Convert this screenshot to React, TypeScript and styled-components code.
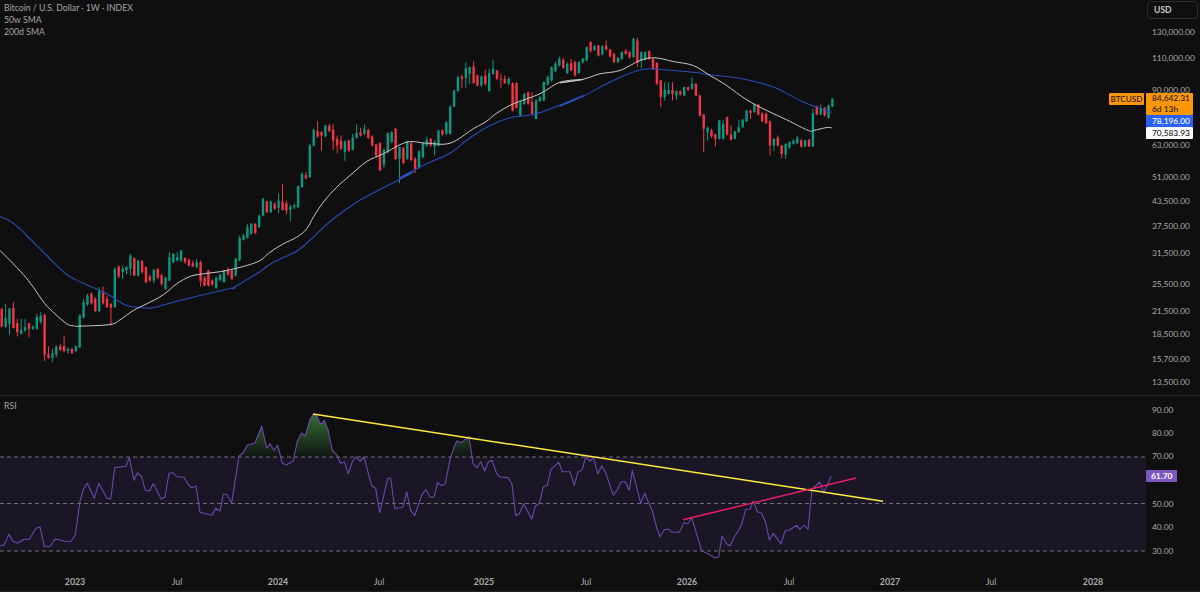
import React from "react";
import styled, { createGlobalStyle } from "styled-components";

type C = [number, number, number, number?, number?];
const S3: C[] = [[0,325,378,322,380],[1,352,378,310,382],[1,325,370,322,402],[0,322,382,305,384],[0,368,395,355,408],[1,388,400,355,402],[1,380,390,355,395],[0,368,385,368,410],[1,378,385],[1,350,385,340,388],[1,345,365,335,370],[0,343,462,340,482],[0,462,472,437,475],[1,458,472,445,485],[1,438,462,435,470],[0,438,448,430,452],[0,437,452,405,456],[1,445,452,440,460],[0,445,458,442,460],[1,437,452],[1,345,440],[1,305,350,295,355],[1,285,312,280,316],[0,280,308,276,312],[0,295,332,290,334],[1,272,332,260,335],[0,275,308,258,312],[0,295,320,285,322],[0,310,322,308,375],[1,205,320,200,322],[0,198,228,194,232],[1,205,215,195,235],[1,200,210,196,222],[1,165,205,160,225],[0,172,225,172,227],[1,180,225,178,228],[0,182,215,178,220],[0,200,245,198,248],[0,228,240,222,244],[1,208,240,205,248],[0,205,232,202,236],[0,224,250,220,256],[1,232,265,228,268],[1,170,240,155,242],[1,160,185,158,188],[1,170,180,155,183],[1,150,180,150,184],[0,172,185,170,190],[0,178,195,174,198],[0,188,198,180,200],[1,185,200,175,204],[0,185,243,180,258],[0,232,255,228,258],[0,210,255,208,258],[0,240,252,236,256],[1,232,262,228,265],[1,222,238,220,242],[1,210,245,208,246],[0,208,222,200,226],[0,210,235,208,238],[1,175,225,172,228],[1,112,180,105,182],[1,105,118,100,120],[1,80,112,70,114],[1,70,100,68,102],[0,70,98,68,100],[1,45,80,42,82]];
const S9: C[] = [[1,325,375,322,378],[0,333,365,330,368],[1,333,365,330,368],[0,340,355,335,358],[1,330,352,310,368],[0,333,358,280,360],[0,338,360,330,372],[1,348,358,342,392],[1,345,350,340,356],[1,287,350,285,352],[1,250,290,245,292],[0,253,263,245,268],[1,165,260,160,262],[1,118,165,115,168],[0,122,138,92,142],[0,125,135,122,180],[1,105,138,102,140],[0,106,122,100,125],[0,118,150,100,178],[0,145,165,135,188],[0,150,175,135,178],[1,153,185,150,212],[0,150,180,147,183],[1,142,178,130,180],[1,128,142,102,145],[0,125,135,112,138],[1,115,130,102,133],[0,118,142,115,145],[0,138,165,135,168],[0,162,195,160,200],[0,158,240,155,242],[1,178,222,175,232],[1,128,185,125,188],[1,125,155,122,158],[0,115,205,112,208],[1,170,205,170,278],[0,172,218,170,220],[1,152,205,150,208],[0,158,208,155,212],[0,205,235,200,248],[1,183,232,180,235],[1,158,200,155,203],[1,148,165,138,168],[0,145,165,142,170],[1,155,168,150,195],[1,120,165,118,168],[0,120,132,116,136],[1,95,130,92,133]];
const S4: C[] = [[1,228,310,225,312],[1,180,228,178,230],[1,140,182,135,184],[0,138,145,132,172],[1,113,143,95,172],[1,110,130,108,160],[0,108,158,93,160],[0,135,165,132,168],[1,138,165,135,168],[0,135,160,118,165],[1,128,182,115,184],[1,115,130,88,133],[0,120,145,118,148],[0,145,148,130,172],[0,145,158,135,160],[1,145,160,140,165],[0,158,240,155,243],[0,158,232,156,235],[1,215,255,210,258],[1,190,220,188,223],[0,185,220,183,223],[0,215,250,185,252],[1,210,265,205,267],[1,200,212,196,214],[1,155,210,152,212],[1,140,162,136,165],[1,110,150,108,153],[1,100,122,95,125],[1,85,105,78,108]];
const S5: C[] = [[0,88,112,82,115],[1,100,128,95,130],[0,98,120,85,122],[0,95,135,90,138],[1,95,128,92,130],[1,85,95,82,100],[1,50,90,48,92],[0,35,62,32,66],[1,47,58,44,62],[0,45,75,43,78],[1,47,72,45,75],[0,45,57,30,60],[0,57,78,55,80],[0,70,95,68,98],[1,82,95,80,98],[1,65,85,62,88],[0,62,70,55,72],[0,65,80,62,85],[1,25,80,22,82],[0,30,95,22,110],[1,65,90,62,112],[1,65,88,62,90],[0,62,85,60,88],[0,85,115,83,118],[0,97,160,95,163],[0,150,200,148,230],[1,178,200,155,210],[1,178,190,155,192],[0,178,190,155,210],[1,182,195,180,208],[0,182,192,180,195],[1,170,195,168,197],[0,170,178,168,182],[1,160,175,140,178],[0,160,195,158,197],[0,195,255,193,258],[0,252,295,250,365],[1,292,305,288,330],[0,300,318,295,322],[0,312,325,310,348],[1,270,325,268,327],[1,280,325,268,327],[0,260,312,258,315],[0,312,328,285,330],[1,303,325,300,327],[1,290,305,268,308],[1,268,290,265,292],[1,240,272,238,275],[0,240,248,238,265],[1,222,245,220,247],[0,222,252,220,255],[0,250,272,245,275],[0,250,278,246,280],[0,272,345,270,375],[1,325,345,323,362],[0,322,345,315,348],[0,345,370,343,383],[1,340,372,338,385],[1,335,352,332,355],[1,330,340,327,343],[1,322,338,316,340],[0,330,348,326,352],[1,330,348,328,350],[0,328,348,326,350],[1,248,348,235,350],[0,228,252,225,254],[1,233,252,222,254],[0,232,255,230,258],[1,225,262,222,264],[1,205,228,203,230]];

const section = (arr: C[], off: number) =>
  arr.map(([g, t, b, wt, wb]) => ({
    g, t: off + t / 3, b: off + b / 3,
    wt: off + (wt ?? t - 3) / 3, wb: off + (wb ?? b + 3) / 3,
  }));
const candles = [...section(S3, 200), ...section(S9, 90), ...section(S4, 30), ...section(S5, 30)];

type P = [number, number];
const map = (pts: P[], ox: number, oy: number): P[] => pts.map(([x, y]) => [ox + x / 3, oy + y / 3]);

const smooth = (p: P[]) => {
  let d = `M${p[0][0].toFixed(1)} ${p[0][1].toFixed(1)}`;
  for (let i = 0; i < p.length - 1; i++) {
    const a = p[Math.max(i - 1, 0)], b = p[i], c = p[i + 1], e = p[Math.min(i + 2, p.length - 1)];
    const c1x = b[0] + (c[0] - a[0]) / 6, c1y = b[1] + (c[1] - a[1]) / 6;
    const c2x = c[0] - (e[0] - b[0]) / 6, c2y = c[1] - (e[1] - b[1]) / 6;
    d += `C${c1x.toFixed(1)} ${c1y.toFixed(1)} ${c2x.toFixed(1)} ${c2y.toFixed(1)} ${c[0].toFixed(1)} ${c[1].toFixed(1)}`;
  }
  return d;
};

const white: P[] = [
  ...map([[0,150],[30,180],[70,222],[100,260],[135,310],[165,340],[200,370],[220,376],[240,377],[330,372],[360,358],[400,330],[440,310],[490,283],[530,250],[570,228],[610,220],[680,210]], 0, 200),
  ...map([[320,515],[360,485],[400,460],[440,440],[470,415],[490,380],[520,335],[560,290],[600,255],[650,213],[700,190],[770,155],[830,158]], 150, 90),
  ...map([[450,338],[520,295],[560,272],[590,248],[640,220],[720,190],[780,155],[850,147]], 300, 30),
  ...map([[0,157],[70,146],[120,130],[180,120],[240,90],[285,82],[340,93],[400,105],[450,135],[500,165],[560,208],[620,240],[680,268],[745,300],[760,300],[800,291],[815,292]], 560, 30),
];
const blue: P[] = [
  ...map([[0,48],[40,68],[80,105],[140,165],[200,222],[250,248],[320,280],[380,315],[420,321],[460,322],[520,305],[600,285],[700,262]], 0, 200),
  ...map([[250,592],[320,550],[370,515],[440,482],[490,440],[540,393],[620,335],[700,292],[790,245]], 150, 90),
  ...map([[300,442],[380,400],[450,368],[510,322],[570,285],[630,262],[700,252],[760,232],[850,195]], 300, 30),
  ...map([[0,227],[70,197],[140,160],[200,132],[250,116],[290,116],[400,125],[450,133],[530,142],[600,157],[650,173],[720,210],[770,230],[815,245]], 560, 30),
];

const rsi: P[] = [
  ...map([[0,465],[12,462],[27,430],[38,450],[52,457],[72,445],[88,445],[108,412],[120,407],[133,467],[150,466],[165,445],[182,447],[192,451],[212,452],[226,432],[240,330],[250,295],[262,277],[283,322],[296,277],[320,320],[332,325],[344,230],[378,226],[388,200],[402,268],[412,245],[425,258],[436,298],[448,300],[460,278],[484,325],[495,318],[507,247],[518,245],[530,257],[552,259],[566,283],[575,290],[588,285],[600,364],[636,373],[647,352],[660,360],[670,310],[680,310],[695,335],[717,195],[730,185],[742,162],[765,156],[785,105],[800,172],[810,158],[822,178],[833,162],[847,217],[860,221],[880,210],[892,150],[905,126],[916,135],[930,85],[940,70],[950,75],[962,100],[973,88],[985,120],[997,178],[1010,192],[1021,217],[1033,212],[1045,248],[1057,212],[1068,198],[1080,210],[1092,198],[1115,285],[1127,292],[1139,365],[1163,262],[1172,262],[1184,352]], 0, 390),
  ...map([[0,350],[9,348],[20,303],[32,358],[44,374],[66,310],[78,296],[90,318],[102,318],[113,274],[124,284],[136,278],[150,205],[160,175],[170,150],[184,155],[207,136],[219,218],[231,230],[242,212],[254,240],[265,213],[276,208],[290,248],[300,258],[325,260],[336,280],[347,374],[358,368],[371,338],[395,385],[406,345],[418,337],[430,287],[442,283],[453,235],[476,214],[487,242],[510,242],[523,283],[534,242],[546,238],[557,197],[570,210],[581,200],[593,248],[605,225],[617,245],[640,313],[652,296],[664,272],[676,272],[688,298],[697,238],[722,337],[734,307],[757,360],[770,410],[780,437],[793,416],[804,414],[816,424],[838,424],[852,395],[863,398],[875,380],[890,430],[905,480],[918,485],[945,500],[956,498],[966,435],[980,458],[990,465],[1003,437],[1013,422],[1025,400],[1037,355],[1050,355],[1060,330],[1072,362],[1085,367],[1097,395],[1108,447],[1120,427],[1143,458],[1155,420],[1168,417],[1190,403]], 400, 390),
  ...map([[0,415],[12,402],[24,415],[36,295],[47,285],[59,273],[71,305],[94,255]], 800, 390),
];
const toLine = (p: P[]) => p.map(([x, y]) => `${x.toFixed(1)},${y.toFixed(1)}`).join(" ");
const rsiArea = `${toLine(rsi)} ${rsi[rsi.length - 1][0]},456 0,456`;

const priceTicks: [string, number][] = [["130,000.00",32],["110,000.00",58],["90,000.00",90],["63,000.00",145],["51,000.00",177],["43,500.00",201],["37,500.00",226],["31,500.00",253],["25,500.00",284],["21,500.00",311],["18,500.00",334],["15,700.00",359],["13,500.00",382]];
const rsiTicks: [string, number][] = [["90.00",408.5],["80.00",431.5],["70.00",455],["60.00",477],["50.00",502.5],["40.00",525.5],["30.00",549.5]];
const timeTicks: [string, number, boolean][] = [["2023",75,true],["Jul",177,false],["2024",278,true],["Jul",379,false],["2025",484,true],["Jul",586,false],["2026",687,true],["Jul",789,false],["2027",890,true],["Jul",991,false],["2028",1093,true]];

const AXIS_FONT = `Lato, "Noto Sans", "Liberation Sans", sans-serif`;

const Global = createGlobalStyle`
  html, body { margin: 0; padding: 0; background: #0f0f0f; overflow: hidden; }
  #root { width: 1200px; height: 592px; }
`;
const Chart = styled.div`
  width: 1200px; height: 592px; box-sizing: border-box; background: #0f0f0f; display: flex; flex-direction: column;
  font-family: ${AXIS_FONT}; position: relative; overflow: hidden; border-bottom: 1px solid #1f1f1f; padding-bottom: 1px;
`;
const Row = styled.div<{ $h: number }>`
  display: flex; height: ${(p) => p.$h}px; flex: none;
`;
const MainRow = styled(Row)`
  border-bottom: 1px solid #2a2a2a;
`;
const Plot = styled.div`
  position: relative; width: 1146px; flex: none;
`;
const PlotSvg = styled.svg`
  display: block; width: 100%; height: 100%;
`;
const Axis = styled.div`
  position: relative; flex: 1;
`;
const Tick = styled.span<{ $y: number }>`
  position: absolute; left: 6px; top: ${(p) => p.$y}px; transform: translateY(-50%);
  font-size: 8.4px; line-height: 12px; color: #a9a9a9; white-space: nowrap;
`;
const Legend = styled.div`
  position: absolute; left: 4px; top: 2px; display: flex; flex-direction: column;
  font-size: 8.7px; line-height: 12px; color: #a5a5a5;
`;
const PaneTitle = styled.div`
  position: absolute; left: 4px; top: 4px; font-size: 8.7px; line-height: 12px; color: #a5a5a5;
`;
const UnitButton = styled.div`
  position: absolute; left: 1px; top: 1px; width: 51px; height: 18px; box-sizing: border-box;
  border: 1px solid #2c2c2c; border-radius: 4px; padding-left: 6px;
  display: flex; align-items: center; font-size: 8.6px; font-weight: 700; color: #c6c6c6;
`;
const PriceStack = styled.div`
  position: absolute; left: 0; top: 93px; width: 47px; display: flex; flex-direction: column;
`;
const Price = styled.div<{ $bg: string; $fg: string; $h: number }>`
  height: ${(p) => p.$h}px; background: ${(p) => p.$bg}; color: ${(p) => p.$fg};
  padding-left: 6px; font-size: 8.4px; font-weight: 500; line-height: 11px;
  display: flex; flex-direction: column; justify-content: center; border-radius: 1px;
`;
const SymbolTag = styled.div`
  position: absolute; right: 2px; top: 93px; width: 35px; height: 12px; background: #ff9800;
  color: #1a1206; font-size: 8.2px; font-weight: 500; line-height: 12px; text-align: center; border-radius: 1px;
`;
const RsiBadge = styled.div`
  position: absolute; left: 0; top: 74px; width: 31px; height: 12px; box-sizing: border-box; background: #7e57c2;
  color: #fff; font-size: 8.4px; font-weight: 700; line-height: 12px; padding-left: 5px; border-radius: 1px;
`;
const TimeAxis = styled.div`
  position: relative; flex: 1;
`;
const TimeLabel = styled.span<{ $x: number; $bold: boolean }>`
  position: absolute; left: ${(p) => p.$x}px; top: 5px; transform: translateX(-50%);
  font-size: 8.8px; line-height: 12px; color: #ababab; font-weight: ${(p) => (p.$bold ? 700 : 400)};
`;

export default function App() {
  return (
    <Chart>
      <Global />
      <MainRow $h={395}>
        <Plot>
          <PlotSvg viewBox="0 0 1146 394">
            {candles.map((c, i) => {
              const x = 1.7 + 3.9 * i;
              const col = c.g ? "#089981" : "#f23645";
              return (
                <g key={i} fill={col}>
                  <rect x={x - 0.5} y={c.wt} width={1} height={c.wb - c.wt} />
                  <rect x={x - 1.2} y={c.t} width={2.4} height={c.b - c.t} />
                </g>
              );
            })}
            <path d={smooth(blue)} fill="none" stroke="#274fbd" strokeWidth={1.05} />
            <path d={smooth(white)} fill="none" stroke="#c9c9c9" strokeWidth={1} />
          </PlotSvg>
          <Legend>
            <span>Bitcoin / U.S. Dollar · 1W · INDEX</span>
            <span>50w SMA</span>
            <span>200d SMA</span>
          </Legend>
          <SymbolTag>BTCUSD</SymbolTag>
        </Plot>
        <Axis>
          {priceTicks.map(([t, y]) => <Tick key={t} $y={y}>{t}</Tick>)}
          <UnitButton>USD</UnitButton>
          <PriceStack>
            <Price $bg="#ff9800" $fg="#231500" $h={22}>
              <span>84,642.31</span>
              <span>6d 13h</span>
            </Price>
            <Price $bg="#2962ff" $fg="#ffffff" $h={12}>78,196.00</Price>
            <Price $bg="#ffffff" $fg="#131313" $h={12}>70,583.93</Price>
          </PriceStack>
        </Axis>
      </MainRow>
      <Row $h={175}>
        <Plot>
          <PlotSvg viewBox="0 395 1146 175">
            <defs>
              <linearGradient id="ob" gradientUnits="userSpaceOnUse" x1="0" y1="413" x2="0" y2="456">
                <stop offset="0" stopColor="#4caf50" stopOpacity={0.6} />
                <stop offset="1" stopColor="#4caf50" stopOpacity={0.03} />
              </linearGradient>
              <clipPath id="above"><rect x="0" y="395" width="1146" height="61" /></clipPath>
            </defs>
            <rect x="0" y="456" width="1146" height="94" fill="#1a1625" />
            <polygon points={rsiArea} fill="url(#ob)" clipPath="url(#above)" />
            {[456, 502.5, 550].map((y) => (
              <line key={y} x1="0" x2="1146" y1={y} y2={y} stroke="#7a7780" strokeWidth={0.9} strokeDasharray="4 3" />
            ))}
            <polyline points={toLine(rsi)} fill="none" stroke="#6a48ad" strokeWidth={1.1} strokeLinejoin="round" />
            <line x1="313" y1="413" x2="883" y2="500.3" stroke="#ffeb3b" strokeWidth={1.5} />
            <line x1="683" y1="518.7" x2="856" y2="477" stroke="#e91e63" strokeWidth={1.5} />
          </PlotSvg>
          <PaneTitle>RSI</PaneTitle>
        </Plot>
        <Axis>
          {rsiTicks.map(([t, y]) => <Tick key={t} $y={y - 395}>{t}</Tick>)}
          <RsiBadge>61.70</RsiBadge>
        </Axis>
      </Row>
      <TimeAxis>
        {timeTicks.map(([t, x, b]) => <TimeLabel key={t + x} $x={x} $bold={b}>{t}</TimeLabel>)}
      </TimeAxis>
    </Chart>
  );
}
